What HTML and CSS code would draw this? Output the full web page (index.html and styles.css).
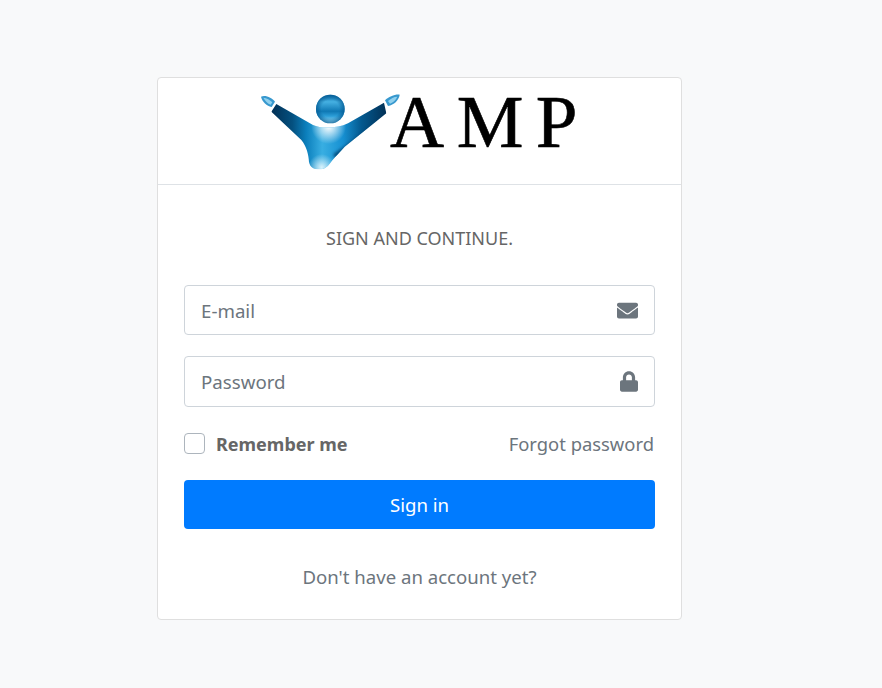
FILE: index.html
```html
<!DOCTYPE html>
<html lang="en">
<head>
  <meta charset="UTF-8" />
  <meta name="viewport" content="width=device-width, initial-scale=1.0" />
  <title>Sign in</title>
  <link rel="stylesheet" href="styles.css">
</head>
<body>
  <div class="card">
    <div class="card-header">
      <svg class="logo-mark" viewBox="0 30 450 240" width="150" height="80" aria-hidden="true">
        <defs>
          <linearGradient id="bodyFill" x1="65" y1="0" x2="410" y2="0" gradientUnits="userSpaceOnUse">
            <stop offset="0" stop-color="#023055" />
            <stop offset="0.18" stop-color="#04507f" />
            <stop offset="0.3" stop-color="#0b7fbc" />
            <stop offset="0.44" stop-color="#38aee2" />
            <stop offset="0.62" stop-color="#1690d2" />
            <stop offset="0.78" stop-color="#04598f" />
            <stop offset="1" stop-color="#023055" />
          </linearGradient>
          <radialGradient id="chestGlow" cx="236" cy="140" r="52" gradientUnits="userSpaceOnUse">
            <stop offset="0" stop-color="#fff" stop-opacity="1" />
            <stop offset="1" stop-color="#fff" stop-opacity="0" />
          </radialGradient>
          <radialGradient id="hipGlow" cx="215" cy="262" r="40" gradientUnits="userSpaceOnUse">
            <stop offset="0" stop-color="#e2f6fd" stop-opacity="0.95" />
            <stop offset="1" stop-color="#e2f6fd" stop-opacity="0" />
          </radialGradient>
          <linearGradient id="headFill" x1="0" y1="0" x2="0" y2="1">
            <stop offset="0" stop-color="#0a6aa6" />
            <stop offset="0.25" stop-color="#45b0e2" />
            <stop offset="0.58" stop-color="#0f78b4" />
            <stop offset="0.75" stop-color="#2c9ed8" />
            <stop offset="1" stop-color="#b0e6f8" />
          </linearGradient>
          <radialGradient id="headRim" cx="0.5" cy="0.5" r="0.5">
            <stop offset="0.62" stop-color="#045a92" stop-opacity="0" />
            <stop offset="1" stop-color="#045a92" stop-opacity="0.75" />
          </radialGradient>
          <filter id="soften" x="-20%" y="-20%" width="140%" height="140%">
            <feGaussianBlur stdDeviation="5" />
          </filter>
          <clipPath id="bodyClip">
            <path d="M79 72 L189 135 C212 146 262 146 294 130 L402 68 L409 100 L284 200 C270 215 258 228 246 242 C232 262 222 268 208 268 C192 268 180 262 177 246 C176 225 170 200 154 180 L64 95 Z" />
          </clipPath>
        </defs>
        <circle cx="241" cy="87" r="43" fill="url(#headFill)" />
        <circle cx="241" cy="87" r="43" fill="url(#headRim)" />
        <g clip-path="url(#bodyClip)">
          <rect x="50" y="60" width="370" height="215" fill="url(#bodyFill)" />
          <rect x="50" y="60" width="370" height="215" fill="url(#chestGlow)" />
          <path d="M250 222 C290 196 330 165 372 128 L392 118 L300 198 L256 238 Z" fill="#03426f" opacity="0.85" filter="url(#soften)" />
          <rect x="150" y="205" width="130" height="70" fill="url(#hipGlow)" />
        </g>
        <path d="M33 50 C47 44 66 54 75 65 L65 81 C50 77 37 66 33 50 Z" fill="#3798ce" />
        <path d="M40 53 C50 53 60 60 67 67 L62 74 C53 71 45 62 40 53 Z" fill="#8fd0ee" />
        <path d="M449 44 C436 42 416 50 405 61 L414 78 C432 74 446 62 449 44 Z" fill="#3798ce" />
        <path d="M442 50 C432 50 422 56 414 63 L420 71 C430 66 438 60 442 50 Z" fill="#8fd0ee" />
      </svg>
      <span class="logo-text">AMP</span>
    </div>
    <div class="card-body">
      <p class="login-msg">SIGN AND CONTINUE.</p>
      <form>
        <div class="input-group">
          <input type="text" placeholder="E-mail">
          <svg class="input-icon icon-mail" viewBox="0 0 512 512" aria-hidden="true">
            <path d="M502.3 190.8c3.9-3.1 9.7-.2 9.7 4.7V400c0 26.5-21.5 48-48 48H48c-26.5 0-48-21.5-48-48V195.6c0-5 5.7-7.8 9.7-4.7 22.4 17.4 52.1 39.5 154.1 113.6 21.1 15.4 56.7 47.8 92.2 47.6 35.7.3 72-32.8 92.3-47.6 102-74.1 131.6-96.3 154-113.7zM256 320c23.2.4 56.6-29.2 73.4-41.4 132.7-96.3 142.8-104.7 173.4-128.7 5.8-4.5 9.2-11.5 9.2-18.9v-19c0-26.5-21.5-48-48-48H48C21.5 64 0 85.5 0 112v19c0 7.4 3.4 14.3 9.2 18.9 30.6 23.9 40.7 32.4 173.4 128.7 16.8 12.2 50.2 41.8 73.4 41.4z" />
          </svg>
        </div>
        <div class="input-group">
          <input type="password" placeholder="Password">
          <svg class="input-icon icon-lock" viewBox="0 0 448 512" aria-hidden="true">
            <path d="M400 224h-24v-72C376 68.2 307.8 0 224 0S72 68.2 72 152v72H48c-26.5 0-48 21.5-48 48v192c0 26.5 21.5 48 48 48h352c26.5 0 48-21.5 48-48V272c0-26.5-21.5-48-48-48zm-104 0H152v-72c0-39.7 32.3-72 72-72s72 32.3 72 72v72z" />
          </svg>
        </div>
        <div class="options">
          <label class="remember"><span class="check"></span>Remember me</label>
          <a class="link" href="#">Forgot password</a>
        </div>
        <button type="button" class="btn-primary">Sign in</button>
      </form>
      <p class="signup"><a class="link" href="#">Don't have an account yet?</a></p>
    </div>
  </div>
</body>
</html>
```

FILE: styles.css
```css
* {
  box-sizing: border-box;
  margin: 0;
  padding: 0;
}

body {
  min-height: 688px;
  background-color: #f8f9fa;
  font-family: "Noto Sans", "Liberation Sans", sans-serif;
  color: #666;
  overflow: hidden;
}

.card {
  width: 525px;
  height: 543px;
  margin: 77px 0 0 157px;
  background-color: #fff;
  border: 1px solid #dfdfdf;
  border-radius: 4px;
}

.card-header {
  display: flex;
  align-items: flex-start;
  height: 107px;
  padding: 12px 0 0 92px;
  border-bottom: 1px solid #dee2e6;
}

.logo-mark {
  flex-shrink: 0;
}

.logo-text {
  margin: -14px 0 0 -10px;
  font-family: "Liberation Serif", serif;
  font-size: 75px;
  line-height: 92px;
  letter-spacing: 12.5px;
  color: #000;
  -webkit-text-stroke: 0.6px #000;
}

.card-body {
  padding: 41px 26px 0;
}

.login-msg {
  margin-bottom: 35px;
  font-size: 18px;
  line-height: 24px;
  text-align: center;
}

.input-group {
  display: flex;
  align-items: center;
  height: 50.4px;
  margin-bottom: 20.9px;
  padding-right: 16px;
  border: 1px solid #ced4da;
  border-radius: 4px;
}

.input-group input {
  flex: 1;
  min-width: 0;
  height: 100%;
  padding-left: 16px;
  border: 0;
  outline: 0;
  background: transparent;
  font-family: inherit;
  font-size: 18.7px;
}

.input-group input::placeholder {
  color: #6c757d;
  opacity: 1;
}

.input-icon {
  fill: #6c757d;
}

.icon-mail {
  width: 21px;
  height: 21px;
}

.icon-lock {
  width: 18px;
  height: 21px;
}

.options {
  display: flex;
  align-items: center;
  justify-content: space-between;
  height: 26px;
  margin-top: 24.3px;
  margin-bottom: 23px;
  padding-right: 1px;
  font-size: 18.4px;
}

.remember {
  display: flex;
  align-items: center;
  font-size: 18px;
  font-weight: 700;
}

.check {
  width: 21px;
  height: 21px;
  margin-right: 11px;
  border: 1px solid #adb5bd;
  border-radius: 4px;
  background-color: #fff;
}

.link {
  color: #6c757d;
  text-decoration: none;
}

.btn-primary {
  display: block;
  width: 100%;
  height: 49px;
  border: 0;
  border-radius: 4px;
  background-color: #007bff;
  color: #fff;
  font-family: inherit;
  font-size: 18.6px;
}

.signup {
  margin-top: 35px;
  font-size: 18.6px;
  line-height: 26px;
  text-align: center;
}
```
